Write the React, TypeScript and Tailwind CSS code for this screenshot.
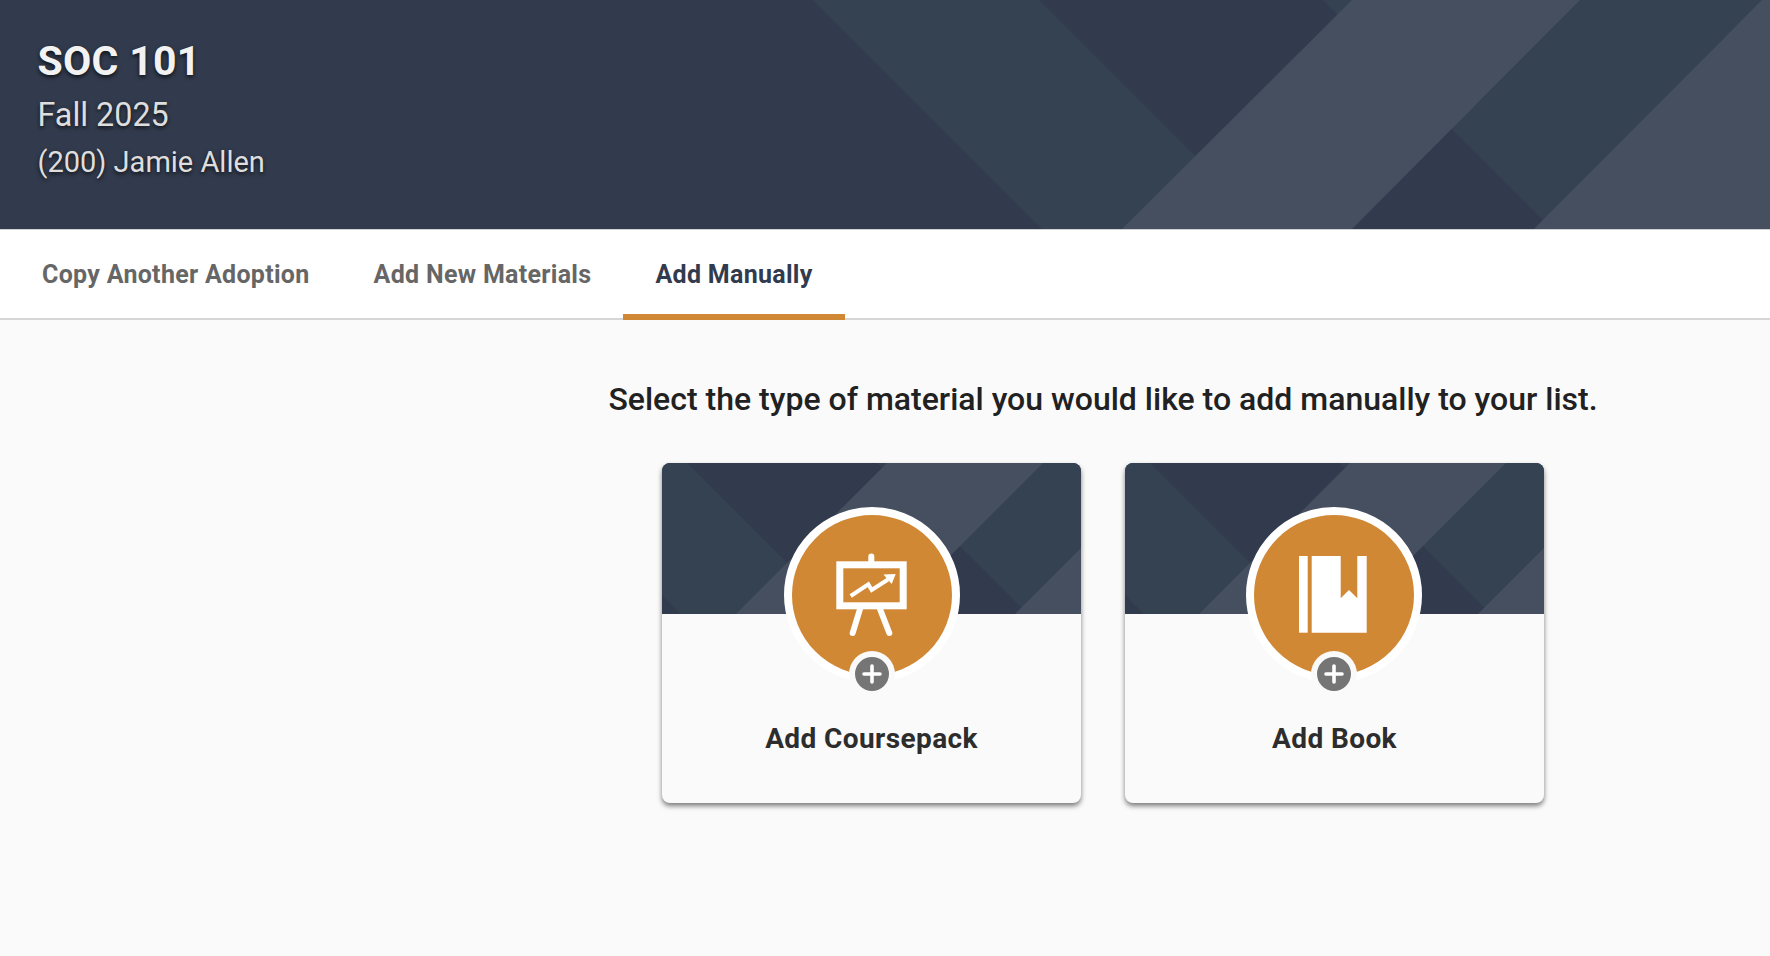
import React from "react";

const tabs = ["Copy Another Adoption", "Add New Materials", "Add Manually"];

function HeaderPattern() {
  return (
    <svg className="absolute inset-0 h-full w-full" viewBox="0 0 1770 229" preserveAspectRatio="none">
      <polygon points="813,0 1039,0 1268,229 1042,229" fill="#354252" />
      <polygon points="1323,0 1770,0 1770,229 1552,229" fill="#354252" />
      <polygon points="1352,0 1580,0 1352,229 1122,229" fill="#464f60" />
      <polygon points="1762,0 1770,0 1770,229 1534,229" fill="#464f60" />
    </svg>
  );
}

function CardPattern() {
  return (
    <svg className="absolute inset-0 h-full w-full" viewBox="0 0 419 151" preserveAspectRatio="none">
      <polygon points="0,0 25,0 176,151 19,151 0,132" fill="#354252" />
      <polygon points="215,0 419,0 419,151 366,151" fill="#354252" />
      <polygon points="225,0 381,0 230,151 74,151" fill="#464f60" />
      <polygon points="419,85 419,151 353,151" fill="#464f60" />
    </svg>
  );
}

function CoursepackIcon() {
  return (
    <svg width="80" height="90" viewBox="0 0 80 90" fill="none" stroke="white">
      <rect x="7.8" y="14.8" width="63.4" height="41" strokeWidth="7" />
      <line x1="39.3" y1="6.5" x2="39.3" y2="12" strokeWidth="6" strokeLinecap="round" />
      <line x1="28" y1="59" x2="20.7" y2="83" strokeWidth="6" strokeLinecap="round" />
      <line x1="48" y1="59" x2="57.3" y2="83" strokeWidth="6" strokeLinecap="round" />
      <polyline points="18.7,46 36.3,34.3 39.7,40 56,29.5" strokeWidth="4" />
      <polygon points="63.7,24 51.5,24.5 59.7,34" fill="white" stroke="none" />
    </svg>
  );
}

function BookIcon() {
  return (
    <svg width="80" height="90" viewBox="0 0 80 90" fill="white">
      <rect x="5" y="6" width="8.7" height="76.7" />
      <path d="M17.7 6H46.7V48.3L55 40L63.3 48.3V6H72.7V82.7H17.7Z" />
    </svg>
  );
}

function AddCard({ label, icon, circleLeft }: { label: string; icon: React.ReactNode; circleLeft: string }) {
  return (
    <div className="relative h-[340px] w-[419px] rounded-lg bg-[#fafafa] shadow-[0_3px_5px_rgba(0,0,0,0.5)]">
      <div className="relative h-[151px] overflow-hidden rounded-t-lg bg-[#323b4d]">
        <CardPattern />
      </div>
      <div className={`absolute top-[44px] flex size-[176px] items-center justify-center rounded-full border-8 border-white bg-[#d08835] ${circleLeft}`}>
        {icon}
        <span className="absolute left-[57px] top-[136px] flex size-[46px] items-center justify-center rounded-full bg-[#fafafa]">
          <span className="flex size-[34px] items-center justify-center rounded-full bg-[#757575]">
            <svg width="20" height="20" viewBox="0 0 20 20" stroke="white" strokeWidth="3.6" strokeLinecap="round">
              <line x1="10" y1="2" x2="10" y2="18" />
              <line x1="2" y1="10" x2="18" y2="10" />
            </svg>
          </span>
        </span>
      </div>
      <div className="pt-[107px] text-center text-[28px] leading-[36px] font-bold tracking-[0.4px] text-[#2d2d2d]">{label}</div>
    </div>
  );
}

export default function App() {
  return (
    <div className="flex h-[956px] flex-col overflow-hidden bg-[#fafafa] font-['Roboto',sans-serif]">
      <header className="relative h-[230px] shrink-0 border-b border-[#d0d0d0] bg-[#323b4d] pl-[37.5px] pt-[36px] [text-shadow:0_2px_4px_rgba(0,0,0,0.75)]">
        <HeaderPattern />
        <div className="relative">
          <h1 className="text-[41px] leading-[50px] font-bold tracking-[0.3px] text-[#f2f2f2]">SOC 101</h1>
          <p className="mt-[7px] text-[32.3px] leading-[44px] text-[#dedede]">Fall 2025</p>
          <p className="mt-[3px] text-[29px] leading-[44px] text-[#dedede]">(200) Jamie Allen</p>
        </div>
      </header>

      <nav className="flex h-[90px] shrink-0 border-b-2 border-[#d6d6d6] bg-white pl-[10px]">
        {tabs.map((tab, i) => (
          <div
            key={tab}
            className={
              i === 2
                ? "-mb-[2px] flex h-[90px] items-center border-b-[6px] border-[#d08835] px-[32px] pt-[6px] text-[25px] font-bold tracking-[0.3px] text-[#323b4d]"
                : "flex h-[90px] items-center px-[32px] pb-[1px] text-[25px] font-bold tracking-[0.3px] text-[#666666]"
            }
          >
            {tab}
          </div>
        ))}
      </nav>

      <main className="flex flex-col items-center pl-[436px] pt-[54px]">
        <h2 className="text-[32px] leading-[50px] font-medium text-[#212121]">
          Select the type of material you would like to add manually to your list.
        </h2>
        <div className="mt-[39px] flex gap-[44px]">
          <AddCard label="Add Coursepack" icon={<CoursepackIcon />} circleLeft="left-[122px]" />
          <AddCard label="Add Book" icon={<BookIcon />} circleLeft="left-[121px]" />
        </div>
      </main>
    </div>
  );
}
